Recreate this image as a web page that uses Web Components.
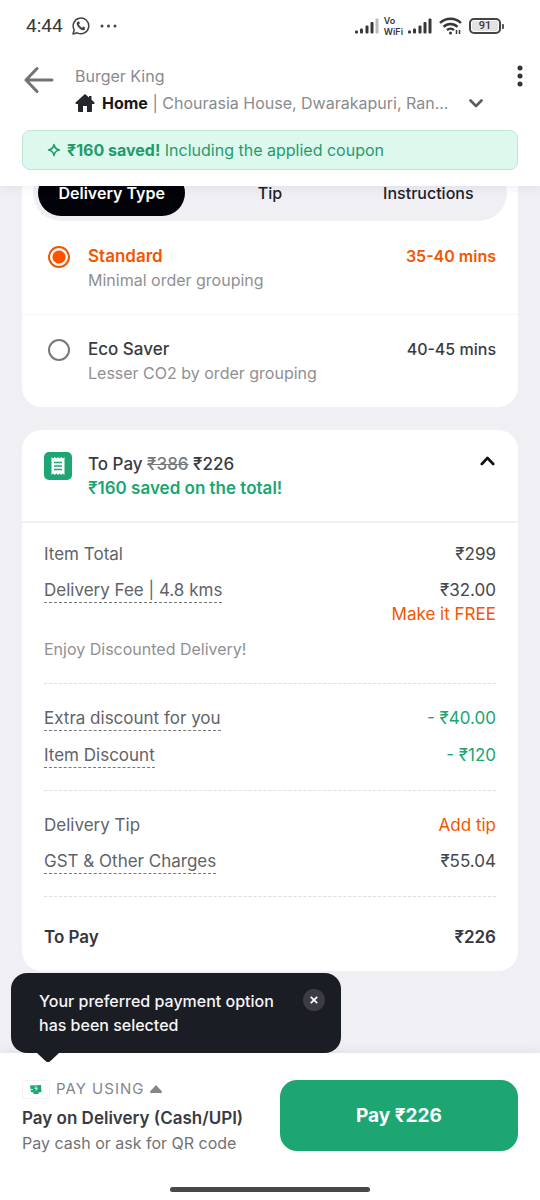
<!DOCTYPE html>
<html lang="en">
<head>
<meta charset="utf-8">
<meta name="viewport" content="width=device-width, initial-scale=1">
<title>Checkout</title>
<style>
  body { margin: 0; background: #f0eff4; color: #3a3b40; font: 400 17px/24px Inter, "Noto Sans", sans-serif; }
</style>
</head>
<body>
<checkout-page></checkout-page>
<script>
const define = (name, html, setup) => {
  const template = document.createElement('template');
  template.innerHTML = `<style>*{box-sizing:border-box}button{font:inherit;color:inherit;background:none;border:0;padding:0;cursor:pointer}svg{display:block}</style>${html}`;
  customElements.define(name, class extends HTMLElement {
    constructor() {
      super();
      this.attachShadow({ mode: 'open' }).append(template.content.cloneNode(true));
    }
    connectedCallback() { if (setup) setup(this, this.shadowRoot); }
  });
};

define('status-bar', `
<style>
  :host { display: flex; align-items: center; height: 52px; padding: 0 36px 0 26px; color: #38383a; font: 400 19px/24px Roboto, sans-serif; }
  .left, .right { display: flex; align-items: center; }
  .left { gap: 9px; }
  .right { gap: 5px; margin-left: auto; }
  .vo { font: 600 9px/11px Inter, sans-serif; }
  .wifi { margin: 0 2px; }
  .battery { display: flex; align-items: center; }
  .level { width: 32px; height: 16px; border: 2px solid #444; border-radius: 5px; background: #e2e2e2; box-shadow: inset 0 0 0 1px #fff; font: 500 11px/12px Roboto, sans-serif; text-align: center; }
  .cap { width: 2px; height: 5px; margin-left: 1px; border-radius: 0 1px 1px 0; background: #555; }
</style>
<div class="left"><span>4:44</span>
  <svg width="18" height="18" viewBox="0 0 18 18" fill="none" stroke="#444" stroke-width="1.5"><path d="M1 17l1.2-4.2A7.8 7.8 0 1 1 5.3 15.800z" stroke-linejoin="round"/><path d="M6.200 5.200c-.9.900-.8 2.200 1 4.400 2 2.300 4 3.300 5.200 2.200" stroke-width="2"/><path d="M6 4.700l1.300 2M10.500 10.300l2.300 1.200" stroke-width="2"/></svg>
  <svg width="18" height="4" viewBox="0 0 18 4" fill="#444"><circle cx="3" cy="2" r="1.500"/><circle cx="9.500" cy="2" r="1.500"/><circle cx="16" cy="2" r="1.500"/></svg>
</div>
<div class="right">
  <svg width="24" height="16" viewBox="0 0 24 16" fill="#38383a"><rect y="12.500" width="3" height="3" rx="1"/><rect x="5" y="10.500" width="3" height="5" rx="1"/><rect x="10.500" y="7.500" width="3" height="8" rx="1"/><rect x="15.500" y="4" width="3" height="11.500" rx="1"/><rect x="20.500" y="0.500" width="3" height="15" rx="1" fill="#bbb"/></svg>
  <span class="vo">Vo<br>WiFi</span>
  <svg width="24" height="16" viewBox="0 0 24 16" fill="#38383a"><rect y="12.500" width="3" height="3" rx="1"/><rect x="5" y="10.500" width="3" height="5" rx="1"/><rect x="10.500" y="7.500" width="3" height="8" rx="1"/><rect x="15.500" y="4" width="3" height="11.500" rx="1"/><rect x="20.500" y="0.500" width="3" height="15" rx="1"/></svg>
  <svg class="wifi" width="23" height="18" viewBox="0 0 23 18" fill="none" stroke="#38383a" stroke-width="2.400"><path d="M1 6a15 15 0 0 1 21 0M4.500 9.800a10 10 0 0 1 14 0M8 13.200a5 5 0 0 1 7 0"/><circle cx="11.500" cy="16" r="1.500" fill="#38383a" stroke="none"/><path d="M17.500 13v4M20.500 13v4" stroke-width="1.500"/></svg>
  <div class="battery"><div class="level">91</div><div class="cap"></div></div>
</div>`);

define('savings-banner', `
<style>
  :host { display: flex; align-items: center; gap: 6px; height: 40px; padding: 0 24px; border: 1px solid #bfe6d6; border-radius: 8px; background: #ddf9ee; color: #1f9c6c; font-size: 16px; }
</style>
<svg width="14" height="14" viewBox="0 0 14 14" fill="none" stroke="#1f9c6c" stroke-width="1.500" stroke-linejoin="round"><path d="M7 1.500Q7.800 6.200 12.500 7 7.800 7.800 7 12.500 6.200 7.800 1.500 7 6.200 6.200 7 1.500z"/></svg>
<span><slot></slot></span>`);

define('page-header', `
<style>
  :host { display: block; position: sticky; top: 0; z-index: 2; background: #fff; box-shadow: 0 2px 10px rgba(40,40,80,.07); }
  .bar { display: flex; padding: 12px 15px 15px 24px; }
  .back { align-self: flex-start; margin: 2px 21px 0 0; }
  .place { flex: 1; min-width: 0; color: #8a8a8d; font-size: 16px; }
  .address { display: flex; align-items: center; gap: 7px; width: 100%; margin-top: 3px; font-size: 16px; text-align: left; }
  .address b { color: #17181c; font-weight: 700; }
  .text { overflow: hidden; white-space: nowrap; text-overflow: ellipsis; }
  .chev { margin-left: 14px; }
  .more { align-self: flex-start; padding: 1px 2px; }
  .wrap { padding: 0 22px 16px; }
</style>
<status-bar></status-bar>
<div class="bar">
  <button class="back" aria-label="Back"><svg width="30" height="28" viewBox="0 0 30 28" fill="none" stroke="#737376" stroke-width="3" stroke-linecap="round" stroke-linejoin="round"><path d="M28 14H2M13 2.500L2 14l11 11.500"/></svg></button>
  <div class="place">
    <div>Burger King</div>
    <button class="address">
      <svg width="20" height="18" viewBox="0 0 20 18" fill="#24262c"><path d="M10 0L0.500 8.500Q0 10 1.500 10H3v7q0 1 1 1h4v-6h4v6h4q1 0 1-1v-7h1.500Q20 10 19.500 8.500L16.500 5.800V2h-2.500v1.600z"/></svg>
      <span class="text"><b>Home</b> | Chourasia House, Dwarakapuri, Ran...</span>
      <svg class="chev" width="14" height="9" viewBox="0 0 14 9" fill="none" stroke="#5c5d62" stroke-width="2.600" stroke-linecap="round" stroke-linejoin="round"><path d="M1.500 1.500L7 7l5.500-5.500"/></svg>
    </button>
  </div>
  <button class="more" aria-label="More options"><svg width="6" height="22" viewBox="0 0 6 22" fill="#333"><circle cx="3" cy="3" r="2.500"/><circle cx="3" cy="11" r="2.500"/><circle cx="3" cy="19" r="2.500"/></svg></button>
</div>
<div class="wrap"><savings-banner><b>₹160 saved!</b> Including the applied coupon</savings-banner></div>`);

define('surface-card', `
<style>:host { display: block; border-radius: 20px; background: #fff; }</style><slot></slot>`);

define('section-tabs', `
<style>
  :host { display: grid; grid-template-columns: repeat(3, 1fr); gap: 11px; margin: 0 11px; padding: 5px; border-radius: 28px; background: #f0eff4; color: #202127; font-size: 16px; font-weight: 500; }
  button { height: 46px; border-radius: 23px; }
  button[aria-selected=true] { background: #020309; color: #fff; font-weight: 600; }
</style>
<button role="tab" aria-selected="true">Delivery Type</button><button role="tab" aria-selected="false">Tip</button><button role="tab" aria-selected="false">Instructions</button>`);

define('delivery-option', `
<style>
  :host { display: block; padding: 22px; font-size: 17px; }
  :host([divided]) { border-bottom: 1px solid #f4f4f6; padding-top: 23px; }
  label { display: flex; }
  input { appearance: none; flex: none; width: 22px; height: 22px; margin: 2px 18px 0 4px; border: 2px solid #77787c; border-radius: 50%; }
  input:checked { border-color: #f15700; background: radial-gradient(circle, #ff5200 6px, #fff 7px); }
  .text { flex: 1; }
  .name, .time { font-weight: 500; }
  :host([selected]) .name, :host([selected]) .time { color: #f15700; font-weight: 600; }
  .note { color: #909093; font-size: 16px; }
  .time { font-size: 16px; }
</style>
<label><input type="radio" name="speed">
<div class="text"><div class="name"><slot></slot></div><div class="note"><slot name="note"></slot></div></div>
<div class="time"><slot name="time"></slot></div></label>`, (host, root) => {
  root.querySelector('input').checked = host.hasAttribute('selected');
});

define('bill-row', `
<style>
  :host { display: flex; justify-content: space-between; align-items: flex-start; color: #626368; font-size: 17px; }
  .value { color: #46474b; text-align: right; }
  .value ::slotted(*) { display: block; }
  button { border-bottom: 1px dashed #77787c; }
  :host([tone=good]) .value { color: #1ba672; }
  :host([total]) { font-weight: 600; }
  :host([total]), :host([total]) .value { color: #36373c; }
</style>
<span class="label"><slot></slot></span><div class="value"><slot name="value"></slot></div>`, (host, root) => {
  if (!host.hasAttribute('info')) return;
  const button = document.createElement('button');
  const label = root.querySelector('.label');
  button.append(...label.childNodes);
  label.replaceWith(button);
});

define('link-button', `
<style>:host { display: inline-block; } button { color: #f15700; }</style><button><slot></slot></button>`);

define('bill-summary', `
<style>
  :host { display: block; }
  header { display: flex; align-items: flex-start; padding: 22px 22px 21px; border-bottom: 2px solid #f1f1f3; font-weight: 500; font-size: 17px; }
  .icon { flex: none; margin-right: 16px; }
  .title { flex: 1; }
  s { color: #77787c; }
  .saved { color: #1ba672; font-weight: 600; }
  .toggle { padding: 4px 1px; }
  section { display: grid; gap: 12px; margin: 0 22px; padding: 22px 0; border-bottom: 1px dashed #dddde2; }
  section:first-of-type { padding: 19px 0 23px; }
  section:last-of-type { padding-top: 28px; border: 0; }
  p { margin: 0; color: #909093; font-size: 16px; line-height: 22px; }
</style>
<header>
  <svg class="icon" width="28" height="28" viewBox="0 0 28 28"><rect width="28" height="28" rx="5" fill="#1ba672"/><path d="M7.500 5l1.600 1.500L10.700 5l1.700 1.500L14 5l1.600 1.500L17.300 5l1.600 1.500L20.500 5v18l-1.600-1.500-1.600 1.500-1.700-1.500L14 23l-1.600-1.500-1.700 1.500-1.600-1.500L7.500 23z" fill="#fff"/><path d="M10 10.500h8M10 14h8M10 17.500h8" stroke="#1ba672" stroke-width="1.500"/></svg>
  <div class="title"><div>To Pay <s>₹386</s> ₹226</div><div class="saved">₹160 saved on the total!</div></div>
  <button class="toggle" aria-label="Collapse bill"><svg width="15" height="10" viewBox="0 0 15 10" fill="none" stroke="#111" stroke-width="2.600" stroke-linecap="round" stroke-linejoin="round"><path d="M1.800 8L7.500 2l5.700 6"/></svg></button>
</header>
<section>
  <bill-row>Item Total<span slot="value">₹299</span></bill-row>
  <bill-row info>Delivery Fee | 4.8 kms<span slot="value">₹32.00</span><link-button slot="value">Make it FREE</link-button></bill-row>
  <p>Enjoy Discounted Delivery!</p>
</section>
<section>
  <bill-row info tone="good">Extra discount for you<span slot="value">- ₹40.00</span></bill-row>
  <bill-row info tone="good">Item Discount<span slot="value">- ₹120</span></bill-row>
</section>
<section>
  <bill-row>Delivery Tip<link-button slot="value">Add tip</link-button></bill-row>
  <bill-row info>GST &amp; Other Charges<span slot="value">₹55.04</span></bill-row>
</section>
<section><bill-row total>To Pay<span slot="value">₹226</span></bill-row></section>`);

define('hint-bubble', `
<style>
  :host { display: flex; align-items: flex-start; gap: 20px; padding: 16px 16px 16px 28px; border-radius: 16px; background: #1b1d25; color: #f5f5f7; font-size: 16px; font-weight: 500; }
  p { flex: 1; margin: 0; }
  .close { flex: none; width: 22px; height: 22px; border-radius: 50%; background: #3c3d44; display: grid; place-items: center; }
  .tip { position: absolute; left: 26px; top: 100%; }
</style>
<p><slot></slot></p>
<button class="close" aria-label="Dismiss"><svg width="8" height="8" viewBox="0 0 10 10" stroke="#fff" stroke-width="2.200"><path d="M1 1l8 8M9 1l-8 8"/></svg></button>
<svg class="tip" width="22" height="9" viewBox="0 0 22 9" fill="#1b1d25"><path d="M0 0h22L14 7.500Q11 10.500 8 7.500z"/></svg>`);

define('pay-footer', `
<style>
  :host { display: block; position: sticky; bottom: 0; z-index: 2; background: #fff; box-shadow: 0 -2px 10px rgba(40,40,80,.07); }
  hint-bubble { position: absolute; left: 11px; bottom: 100%; width: 330px; }
  .row { display: flex; justify-content: space-between; align-items: flex-start; padding: 24px 22px 0; }
  .method { text-align: left; white-space: nowrap; }
  .using { display: flex; align-items: center; gap: 6px; color: #85868a; font-size: 15px; letter-spacing: 1px; }
  .name { margin-top: 5px; color: #3a3b40; font-size: 17px; font-weight: 600; }
  .note { margin-top: 1px; color: #717276; font-size: 16px; }
  .pay { flex: 0 0 48%; height: 71px; margin-top: 3px; border-radius: 17px; background: #1ea672; color: #fff; font-size: 19px; font-weight: 700; }
  .home { width: 200px; height: 5px; margin: 32px auto 8px; border-radius: 3px; background: #48484a; }
  .home { margin-bottom: 11px; }
</style>
<hint-bubble>Your preferred payment option has been selected</hint-bubble>
<div class="row">
  <button class="method">
    <div class="using"><svg width="28" height="19" viewBox="0 0 28 19"><rect x=".5" y=".5" width="27" height="18" rx="3" fill="#fff" stroke="#f2f2f4"/><path d="M8 5.500l11-.5.5 7-3 .5v1.500h-5v-1.500l-2.500-.5z" fill="#1ba672"/><path d="M12.500 7h3M12.500 8.500h3l-2 2.500M9 9.500h2" stroke="#bff0dc" fill="none"/></svg><span>PAY USING</span><svg width="12" height="8" viewBox="0 0 12 8" fill="#85868a"><path d="M6 0l6 6.500q0 1.500-1 1.500H1Q0 8 0 6.500z"/></svg></div>
    <div class="name">Pay on Delivery (Cash/UPI)</div>
    <div class="note">Pay cash or ask for QR code</div>
  </button>
  <button class="pay">Pay ₹226</button>
</div>
<div class="home"></div>`);

define('checkout-page', `
<style>
  :host { display: flex; flex-direction: column; min-height: 100vh; }
  main { flex: 1; display: flex; flex-direction: column; gap: 23px; margin-top: -21px; padding: 0 22px 82px; }
</style>
<page-header></page-header>
<main>
  <surface-card>
    <section-tabs role="tablist"></section-tabs>
    <delivery-option selected divided>Standard<span slot="note">Minimal order grouping</span><span slot="time">35-40 mins</span></delivery-option>
    <delivery-option>Eco Saver<span slot="note">Lesser CO2 by order grouping</span><span slot="time">40-45 mins</span></delivery-option>
  </surface-card>
  <surface-card><bill-summary></bill-summary></surface-card>
</main>
<pay-footer></pay-footer>`);
</script>
</body>
</html>
